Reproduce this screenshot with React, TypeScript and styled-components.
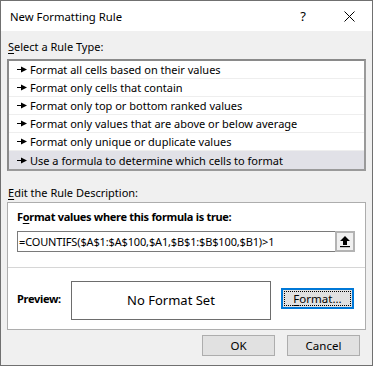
import React from "react";
import styled, { createGlobalStyle } from "styled-components";

const Global = createGlobalStyle`
  html, body { margin: 0; padding: 0; background: #f0f0f0; }
  * { box-sizing: border-box; }
`;

const FONT = `"Noto Sans", "Open Sans", sans-serif`;

const Window = styled.div`
  width: 373px;
  height: 366px;
  border: 1px solid #707070;
  background: #f0f0f0;
  display: flex;
  flex-direction: column;
  font-family: ${FONT};
  font-size: 11px;
  color: #000;
`;

const TitleBar = styled.div`
  height: 30px;
  background: #fff;
  display: flex;
  align-items: center;
  padding-left: 9px;
`;

const Title = styled.div`
  flex: 1;
  font-size: 11.3px;
`;

const TitleButton = styled.div<{ $w: number }>`
  width: ${(p) => p.$w}px;
  height: 30px;
  display: flex;
  align-items: center;
  justify-content: center;
  font-size: 13px;
`;

const Body = styled.div`
  flex: 1;
  display: flex;
  flex-direction: column;
  padding: 0 6px;
`;

const SectionLabel = styled.div<{ $mt: number }>`
  margin-top: ${(p) => p.$mt}px;
  margin-left: 1px;
  line-height: 16px;
  height: 16px;
`;

const ListBox = styled.div`
  margin-top: 4px;
  border: 2px solid #8a8a8a;
  border-right-color: #9a9a9a;
  border-bottom-color: #9a9a9a;
  background: #fff;
  display: flex;
  flex-direction: column;
`;

const Row = styled.div<{ $sel?: boolean }>`
  height: 18px;
  display: flex;
  align-items: center;
  padding-left: 8px;
  border-bottom: 1px solid #eeeeee;
  background: ${(p) => (p.$sel ? "#e1e1e7" : "#fff")};
  &:last-child { border-bottom: none; }
`;

const RowText = styled.span`
  margin-left: 3px;
  line-height: 17px;
`;

const Panel = styled.div`
  margin-top: 1px;
  border: 1px solid #adadad;
  background: #fff;
  display: flex;
  flex-direction: column;
`;

const FormulaSection = styled.div`
  padding: 6px 10px 15px 9px;
  border-bottom: 1px solid #d6d6d6;
  display: flex;
  flex-direction: column;
`;

const Bold = styled.div`
  font-weight: 700;
  line-height: 16px;
  letter-spacing: -0.3px;
`;

const InputRow = styled.div`
  margin-top: 6px;
  height: 21px;
  display: flex;
  border: 1px solid #7a7a7a;
  border-right: none;
  width: 338px;
`;

const Input = styled.div`
  flex: 1;
  display: flex;
  align-items: center;
  padding-left: 1px;
  font-size: 11px;
  letter-spacing: -0.15px;
`;

const CollapseButton = styled.div`
  width: 20px;
  height: 21px;
  margin-top: -1px;
  border: 2px solid #b3b3b3;
  background: #f0f0f0;
  display: flex;
  align-items: center;
  justify-content: center;
`;

const PreviewSection = styled.div`
  height: 61px;
  display: flex;
  align-items: center;
  padding: 0 11px 0 9px;
`;

const PreviewLabel = styled.div`
  font-weight: 700;
  letter-spacing: -0.3px;
  width: 54px;
`;

const PreviewBox = styled.div`
  width: 200px;
  height: 39px;
  margin-top: 3px;
  border: 1px solid #6d6d6d;
  display: flex;
  align-items: center;
  justify-content: center;
  font-size: 13px;
`;

const Button = styled.div<{ $focus?: boolean }>`
  width: 73px;
  height: 21px;
  background: #e1e1e1;
  border: ${(p) => (p.$focus ? "2px solid #0078d7" : "1px solid #adadad")};
  display: flex;
  align-items: center;
  justify-content: center;
  padding: ${(p) => (p.$focus ? "1px" : "0")};
  font-size: 11.5px;
`;

const FocusRing = styled.div`
  width: 100%;
  height: 100%;
  border: 1px dotted #000;
  display: flex;
  align-items: center;
  justify-content: center;
`;

const Spacer = styled.div`
  flex: 1;
`;

const Footer = styled.div`
  display: flex;
  justify-content: flex-end;
  gap: 12px;
  margin-top: 5px;
  padding-right: 6px;
`;

const U = styled.span`
  text-decoration: underline;
  text-underline-offset: 2px;
`;

const Pointer = () => (
  <svg width="10" height="7" viewBox="0 0 10 7">
    <rect x="0" y="3" width="5" height="1" fill="#000" />
    <polygon points="4,0.5 10,3.5 4,6.5" fill="#000" />
  </svg>
);

const UpIcon = () => (
  <svg width="10" height="12" viewBox="0 0 10 12">
    <polygon points="5,0 10,5 7,5 7,9 3,9 3,5 0,5" fill="#000" />
    <rect x="0" y="10" width="10" height="1.2" fill="#000" />
  </svg>
);

const CloseIcon = () => (
  <svg width="11" height="11" viewBox="0 0 11 11">
    <path d="M0.5 0.5 L10.5 10.5 M10.5 0.5 L0.5 10.5" stroke="#000" strokeWidth="1" />
  </svg>
);

const rules = [
  "Format all cells based on their values",
  "Format only cells that contain",
  "Format only top or bottom ranked values",
  "Format only values that are above or below average",
  "Format only unique or duplicate values",
  "Use a formula to determine which cells to format",
];

export default function App() {
  return (
    <>
      <Global />
      <Window>
        <TitleBar>
          <Title>New Formatting Rule</Title>
          <TitleButton $w={46}>?</TitleButton>
          <TitleButton $w={46}>
            <CloseIcon />
          </TitleButton>
        </TitleBar>
        <Body>
          <SectionLabel $mt={8}>
            <U>S</U>elect a Rule Type:
          </SectionLabel>
          <ListBox>
            {rules.map((r, i) => (
              <Row key={r} $sel={i === rules.length - 1}>
                <Pointer />
                <RowText>{r}</RowText>
              </Row>
            ))}
          </ListBox>
          <SectionLabel $mt={14}>
            <U>E</U>dit the Rule Description:
          </SectionLabel>
          <Panel>
            <FormulaSection>
              <Bold>
                F<U>o</U>rmat values where this formula is true:
              </Bold>
              <InputRow>
                <Input>=COUNTIFS($A$1:$A$100,$A1,$B$1:$B$100,$B1)&gt;1</Input>
                <CollapseButton>
                  <UpIcon />
                </CollapseButton>
              </InputRow>
            </FormulaSection>
            <PreviewSection>
              <PreviewLabel>Preview:</PreviewLabel>
              <PreviewBox>No Format Set</PreviewBox>
              <Spacer />
              <Button $focus>
                <FocusRing>
                  <span>
                    <U>F</U>ormat...
                  </span>
                </FocusRing>
              </Button>
            </PreviewSection>
          </Panel>
          <Footer>
            <Button>OK</Button>
            <Button>Cancel</Button>
          </Footer>
        </Body>
      </Window>
    </>
  );
}
